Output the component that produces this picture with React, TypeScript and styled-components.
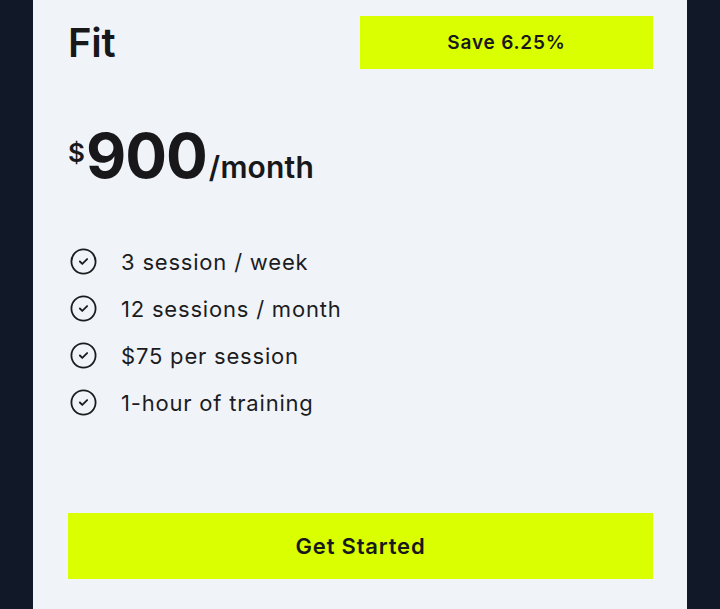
import React from "react";
import styled, { createGlobalStyle } from "styled-components";
import { CircleCheck } from "lucide-react";

const Global = createGlobalStyle`
  html, body { margin: 0; padding: 0; background: #111827; }
  body { font-family: Inter, "Noto Sans", "Liberation Sans", sans-serif; overflow: hidden; }
`;

const Page = styled.div`
  padding: 0 33px;
  min-height: 100vh;
`;

const Card = styled.section`
  background: #f0f4f8;
  padding: 16px 34px 30px 35px;
  display: flex;
  flex-direction: column;
  color: #18181b;
`;

const Header = styled.div`
  display: flex;
  justify-content: space-between;
  align-items: center;
  height: 53px;
`;

const Title = styled.h2`
  margin: 0;
  font-size: 40px;
  line-height: 1;
  font-weight: 600;
  letter-spacing: -0.3px;
`;

const Badge = styled.div`
  width: 293px;
  height: 53px;
  background: #d9ff00;
  display: flex;
  align-items: center;
  justify-content: center;
  font-size: 19px;
  font-weight: 600;
  letter-spacing: 0.8px;
`;

const PriceRow = styled.div`
  margin-top: 56px;
  display: flex;
  align-items: baseline;
  line-height: 1;
`;

const Currency = styled.span`
  align-self: flex-start;
  margin-top: 15px;
  margin-right: 1px;
  font-size: 26px;
  font-weight: 600;
`;

const Amount = styled.span`
  font-size: 62px;
  font-weight: 700;
  letter-spacing: -1px;
  margin-right: 2px;
`;

const Period = styled.span`
  font-size: 30px;
  font-weight: 600;
  letter-spacing: 0.2px;
`;

const Features = styled.ul`
  list-style: none;
  margin: 51px 0 0;
  padding: 0;
`;

const Feature = styled.li`
  display: flex;
  align-items: center;
  gap: 23px;
  height: 47px;
  font-size: 22px;
  letter-spacing: 0.8px;
  color: #1c1c1f;
  svg { flex: none; margin-left: 1px; }
`;

const Cta = styled.button`
  margin-top: 87px;
  height: 66px;
  width: 100%;
  border: none;
  background: #d9ff00;
  font-family: inherit;
  font-size: 22px;
  font-weight: 600;
  letter-spacing: 0.8px;
  color: #18181b;
  cursor: pointer;
`;

const features = [
  "3 session / week",
  "12 sessions / month",
  "$75 per session",
  "1-hour of training",
];

export default function App() {
  return (
    <Page>
      <Global />
      <Card>
        <Header>
          <Title>Fit</Title>
          <Badge>Save 6.25%</Badge>
        </Header>
        <PriceRow>
          <Currency>$</Currency>
          <Amount>900</Amount>
          <Period>/month</Period>
        </PriceRow>
        <Features>
          {features.map((f) => (
            <Feature key={f}>
              <CircleCheck size={29} strokeWidth={1.5} />
              {f}
            </Feature>
          ))}
        </Features>
        <Cta>Get Started</Cta>
      </Card>
    </Page>
  );
}
